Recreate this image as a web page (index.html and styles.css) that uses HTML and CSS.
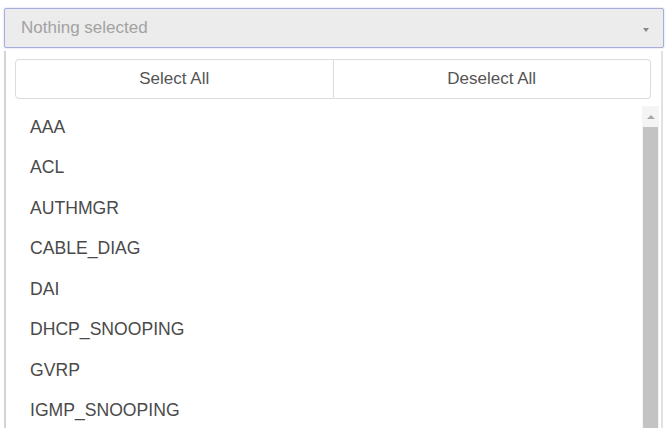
FILE: index.html
```html
<!DOCTYPE html>
<html>
<head>
<meta charset="utf-8">
<link rel="stylesheet" href="styles.css">
</head>
<body>
<div class="wrap">
  <div class="toggle">
    <span class="placeholder">Nothing selected</span>
    <span class="caret"></span>
  </div>
  <div class="menu">
    <div class="actions">
      <div class="act">Select All</div>
      <div class="act">Deselect All</div>
    </div>
    <div class="listbox">
      <ul class="list">
        <li>AAA</li>
        <li>ACL</li>
        <li>AUTHMGR</li>
        <li>CABLE_DIAG</li>
        <li>DAI</li>
        <li>DHCP_SNOOPING</li>
        <li>GVRP</li>
        <li>IGMP_SNOOPING</li>
      </ul>
      <div class="scrollbar">
        <div class="arrow"></div>
        <div class="thumb"></div>
      </div>
    </div>
  </div>
</div>
</body>
</html>
```
FILE: styles.css
```css
html, body {
  margin: 0;
  padding: 0;
  background: #fff;
  height: 100%;
  overflow: hidden;
}
body {
  font-family: "Liberation Sans", Arial, sans-serif;
}
.wrap {
  padding: 8px 5px 0 4px;
}
.toggle {
  height: 38px;
  border: 1px solid #a6afdb;
  border-radius: 2px;
  background: #ececec;
  box-shadow: 0 0 2px rgba(120, 135, 210, 0.45);
  display: flex;
  align-items: center;
  justify-content: space-between;
  padding: 0 14px 0 16px;
}
.placeholder {
  font-size: 17px;
  color: #a2a2a2;
}
.caret {
  width: 0;
  height: 0;
  border-left: 3.5px solid transparent;
  border-right: 3.5px solid transparent;
  border-top: 4px solid #888;
  margin-top: 3px;
}
.menu {
  margin-top: 3px;
  border-left: 2px solid #d4d4d4;
  border-right: 2px solid #e2e2e2;
  padding-top: 8px;
  margin-right: 1px;
}
.actions {
  display: flex;
  margin: 0 10px 0 9px;
  height: 40px;
}
.act {
  flex: 1;
  display: flex;
  align-items: center;
  justify-content: center;
  border: 1px solid #dcdcdc;
  font-size: 17px;
  color: #555;
  background: #fff;
}
.act:first-child {
  border-radius: 4px 0 0 4px;
}
.act:last-child {
  border-left: none;
  border-radius: 0 4px 4px 0;
}
.listbox {
  display: flex;
  margin-top: 7px;
}
.list {
  flex: 1;
  list-style: none;
  margin: 0;
  padding: 1px 0 0;
}
.list li {
  height: 40.5px;
  display: flex;
  align-items: center;
  padding-left: 24px;
  font-size: 17.6px;
  color: #4a4a4a;
}
.scrollbar {
  width: 17px;
  margin-right: 2px;
  background: #f4f4f4;
  display: flex;
  flex-direction: column;
  align-items: center;
}
.arrow {
  height: 21px;
  width: 100%;
  display: flex;
  align-items: center;
  justify-content: center;
}
.arrow::after {
  content: "";
  width: 0;
  height: 0;
  border-left: 4px solid transparent;
  border-right: 4px solid transparent;
  border-bottom: 4px solid #a8a8a8;
}
.thumb {
  flex: 1;
  width: 15px;
  background: #c3c3c3;
}
```
